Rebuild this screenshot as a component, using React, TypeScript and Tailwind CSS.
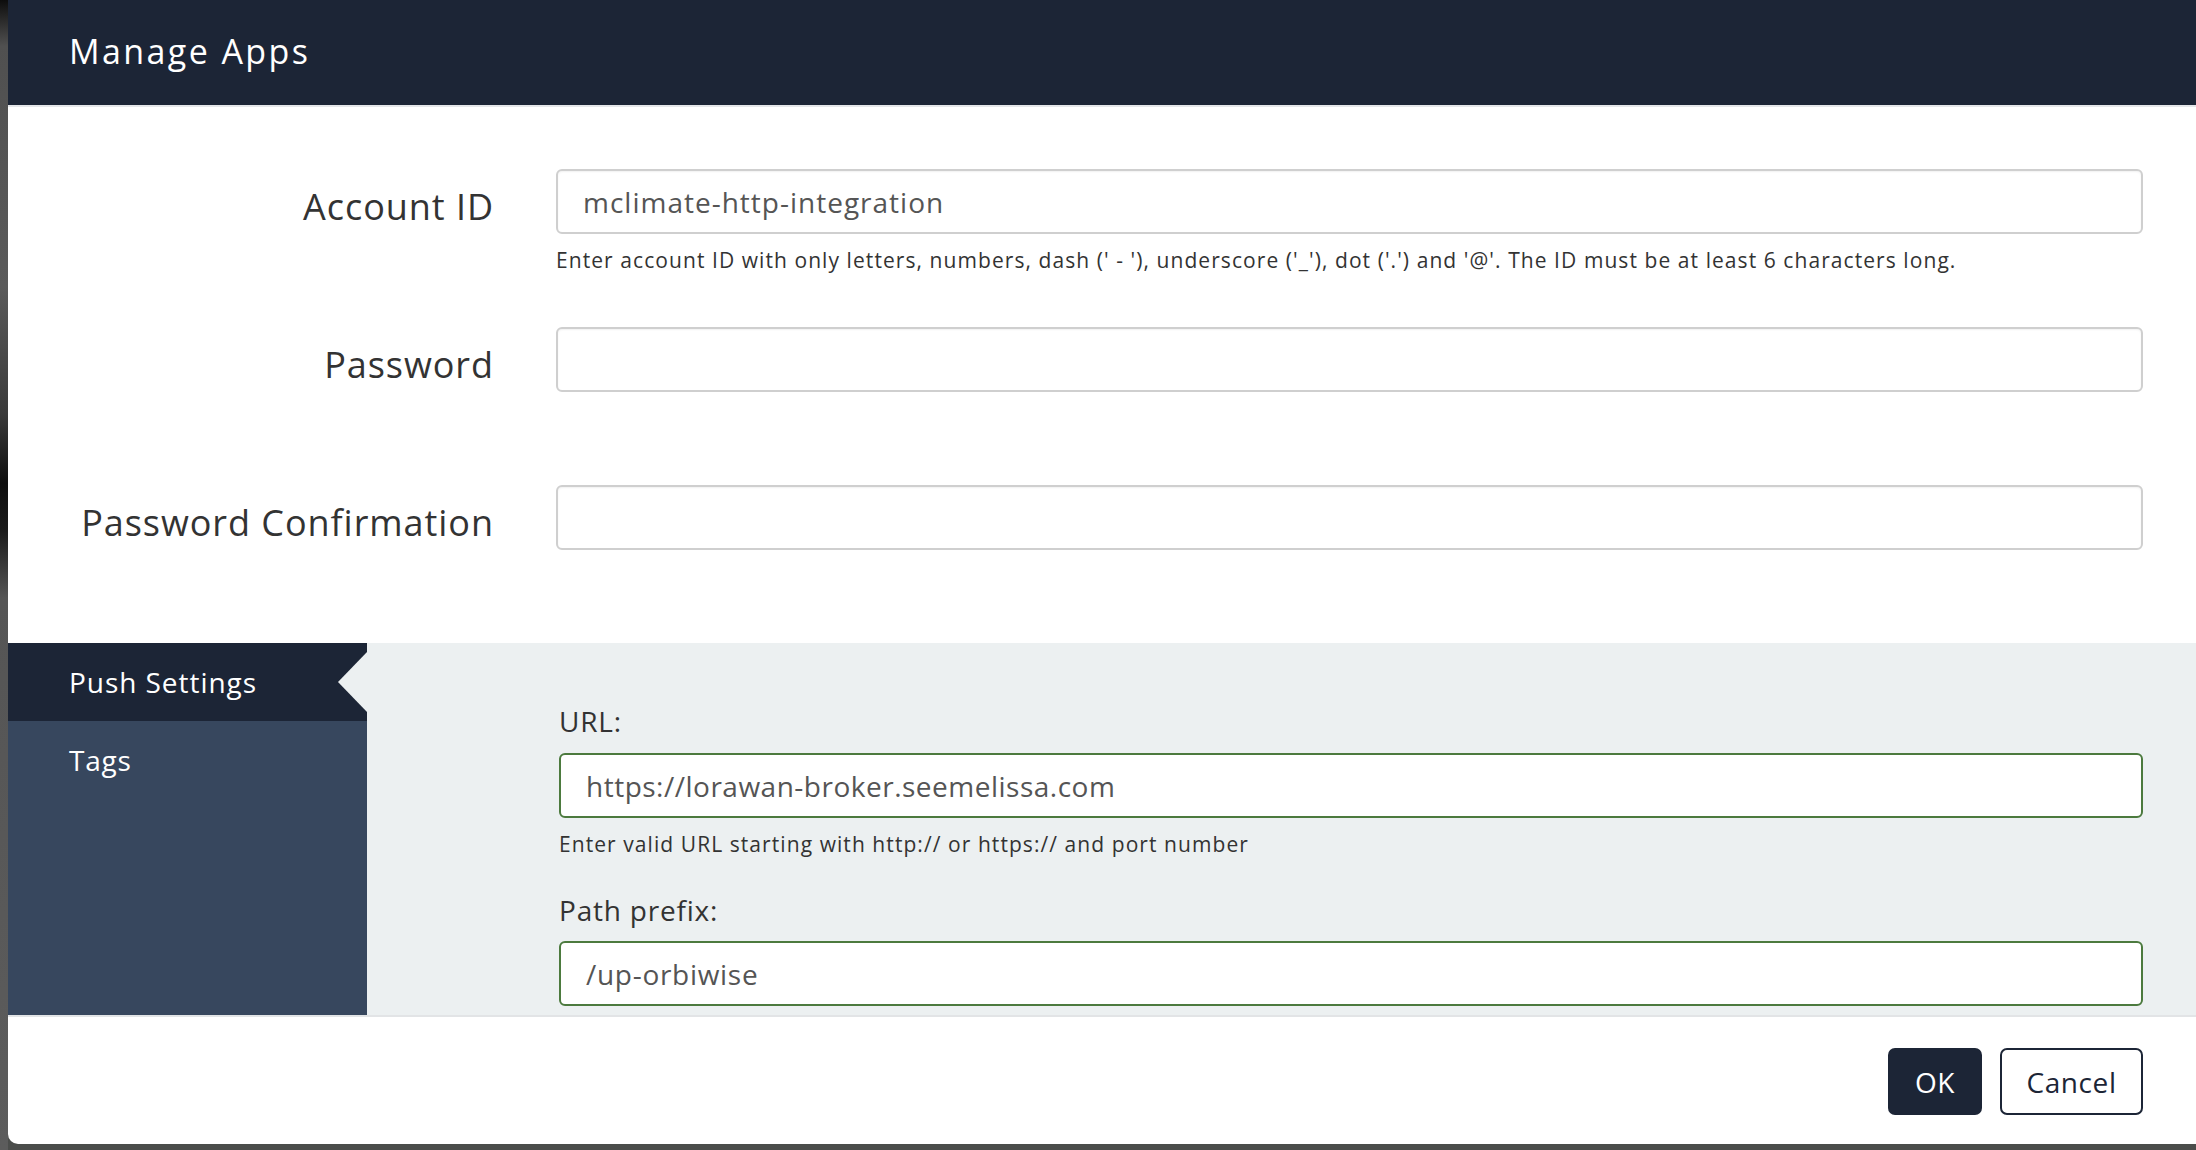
export default function App() {
  const font = { fontFamily: "'Open Sans', 'Noto Sans', sans-serif" };

  return (
    <div
      className="relative flex h-[1150px] w-[2196px] overflow-hidden bg-[#4b4d4b] text-[#333]"
      style={font}
    >
      {/* backdrop strip on the left */}
      <div className="h-[1150px] w-[8px] shrink-0 bg-[linear-gradient(to_bottom,#0d0d0d_0%,#505050_4%,#5a5a5a_25%,#3a3a3a_36%,#0e0e0e_42%,#1a1a1a_46%,#555_52%,#5c5c5c_100%)]" />

      <div className="flex h-[1144px] w-[2188px] flex-col overflow-hidden rounded-bl-[10px] bg-white">
        {/* header */}
        <div className="flex h-[107px] shrink-0 items-center border-b-2 border-[#e4e6e9] bg-[#1c2536] pb-[2px] pl-[61px]">
          <h1 className="text-[34px] font-normal tracking-[2.4px] text-white">Manage Apps</h1>
        </div>

        {/* account fields */}
        <div className="shrink-0 pt-[62px]">
          {[
            {
              label: "Account ID",
              value: "mclimate-http-integration",
              help: "Enter account ID with only letters, numbers, dash (' - '), underscore ('_'), dot ('.') and '@'. The ID must be at least 6 characters long.",
            },
            { label: "Password", value: "", help: "" },
            { label: "Password Confirmation", value: "", help: "" },
          ].map((row) => (
            <div key={row.label} className="flex h-[158px]">
              <div className="w-[486px] shrink-0 pt-[5px] text-right text-[36px] leading-[65px] tracking-[0.95px] text-[#333]">
                {row.label}
              </div>
              <div className="ml-[62px] mr-[53px] flex-1">
                <div className="flex h-[65px] items-center rounded-[6px] border-2 border-[#cfcfcf] bg-white pl-[25px] text-[28px] tracking-[1px] text-[#555] shadow-[inset_0_1px_2px_rgba(0,0,0,0.06)]">
                  {row.value}
                </div>
                {row.help && (
                  <div className="mt-[14px] text-[21px] leading-[24px] tracking-[1.07px] text-[#333]">
                    {row.help}
                  </div>
                )}
              </div>
            </div>
          ))}
        </div>

        {/* settings area */}
        <div className="flex h-[372px] shrink-0 overflow-hidden bg-[#ecf0f1]">
          <div className="w-[359px] shrink-0 bg-[#37475e]">
            <div className="relative flex h-[78px] items-center bg-[#1c2536] pl-[61px] text-[28px] tracking-[0.95px] text-white">
              Push Settings
              <div className="absolute right-0 top-[9px] h-[60px] w-[29px] bg-[#ecf0f1] [clip-path:polygon(100%_0,0_50%,100%_100%)]" />
            </div>
            <div className="flex h-[78px] items-center pl-[61px] text-[28px] tracking-[0.8px] text-white">
              Tags
            </div>
          </div>

          <div className="flex-1 pl-[192px] pr-[53px] pt-[60px]">
            <div className="text-[28px] leading-[36px] tracking-[0.8px] text-[#333]">URL:</div>
            <div className="mt-[14px] flex h-[65px] items-center rounded-[6px] border-2 border-[#4c7a3e] bg-white pl-[25px] text-[28px] tracking-[0.5px] text-[#555]">
              https://lorawan-broker.seemelissa.com
            </div>
            <div className="mt-[14px] text-[21px] leading-[24px] tracking-[1.07px] text-[#333]">
              Enter valid URL starting with http:// or https:// and port number
            </div>
            <div className="mt-[36px] text-[28px] leading-[36px] tracking-[0.8px] text-[#333]">Path prefix:</div>
            <div className="mt-[13px] flex h-[65px] items-center rounded-[6px] border-2 border-[#4c7a3e] bg-white pl-[25px] text-[28px] tracking-[0.7px] text-[#555]">
              /up-orbiwise
            </div>
          </div>
        </div>

        {/* footer */}
        <div className="flex flex-1 justify-end gap-[18px] border-t-2 border-[#e2e4e6] pr-[53px] pt-[31px]">
          <button className="h-[67px] w-[94px] rounded-[7px] bg-[#1c2536] text-[28px] tracking-[0.5px] text-white">
            OK
          </button>
          <button className="h-[67px] w-[143px] rounded-[7px] border-2 border-[#1c2536] bg-white text-[28px] tracking-[0.6px] text-[#1c2536]">
            Cancel
          </button>
        </div>
      </div>
    </div>
  );
}
